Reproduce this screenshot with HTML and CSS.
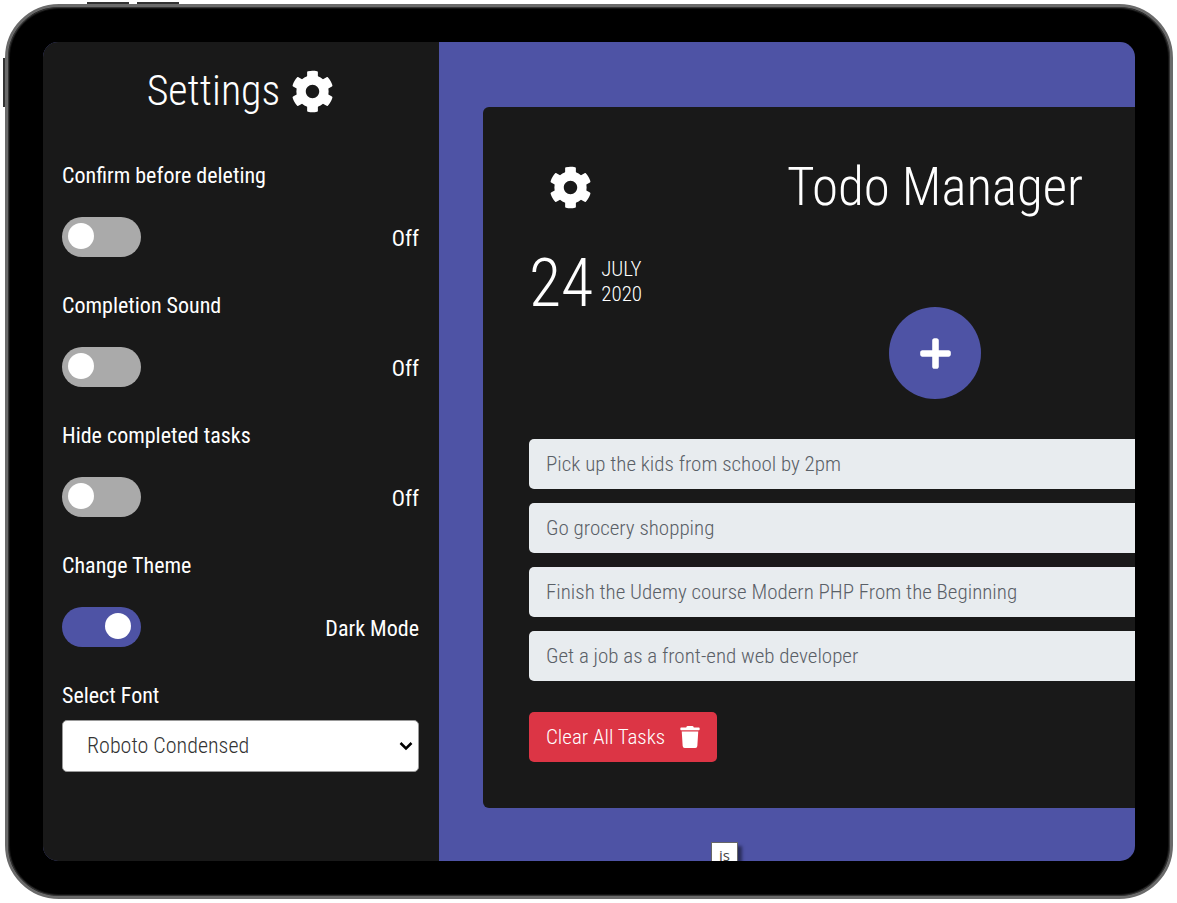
FILE: index.html
```html
<!DOCTYPE html>
<html lang="en">
<head>
<meta charset="utf-8">
<meta name="viewport" content="width=device-width, initial-scale=1">
<title>Todo Manager</title>
<link rel="stylesheet" href="styles.css">
</head>
<body>
<svg class="sprite" aria-hidden="true">
  <symbol id="cog" viewBox="0 0 512 512"><path d="M487.4 315.7l-42.6-24.6c4.3-23.2 4.3-47 0-70.2l42.6-24.6c4.9-2.8 7.1-8.6 5.5-14-11.1-35.6-30-67.8-54.7-94.6-3.8-4.1-10-5.1-14.8-2.3L380.8 110c-17.9-15.4-38.5-27.3-60.8-35.1V25.8c0-5.6-3.9-10.5-9.4-11.7-36.7-8.2-74.3-7.8-109.2 0-5.5 1.2-9.4 6.1-9.4 11.7V75c-22.2 7.9-42.8 19.8-60.8 35.1L88.7 85.5c-4.9-2.8-11-1.9-14.8 2.3-24.7 26.7-43.6 58.9-54.7 94.6-1.7 5.4.6 11.2 5.5 14L67.3 221c-4.3 23.2-4.3 47 0 70.2l-42.6 24.6c-4.9 2.8-7.1 8.6-5.5 14 11.1 35.6 30 67.8 54.7 94.6 3.8 4.1 10 5.1 14.8 2.3l42.6-24.6c17.9 15.4 38.5 27.3 60.8 35.1v49.2c0 5.6 3.9 10.5 9.4 11.7 36.7 8.2 74.3 7.8 109.2 0 5.5-1.2 9.4-6.1 9.4-11.7v-49.2c22.2-7.9 42.8-19.8 60.8-35.1l42.6 24.6c4.9 2.8 11 1.9 14.8-2.3 24.7-26.7 43.6-58.9 54.7-94.6 1.5-5.5-.7-11.3-5.6-14.1zM256 336c-44.1 0-80-35.9-80-80s35.9-80 80-80 80 35.9 80 80-35.9 80-80 80z"/></symbol>
</svg>
<div class="device">
  <div class="screen">
    <aside class="sidebar">
      <h2 class="sidebar-title">Settings <svg class="cog" aria-hidden="true"><use href="#cog"/></svg></h2>
      <div class="setting">
        <label class="setting-name" for="confirm">Confirm before deleting</label>
        <div class="setting-row"><input class="switch" type="checkbox" id="confirm"><span>Off</span></div>
      </div>
      <div class="setting">
        <label class="setting-name" for="sound">Completion Sound</label>
        <div class="setting-row"><input class="switch" type="checkbox" id="sound"><span>Off</span></div>
      </div>
      <div class="setting">
        <label class="setting-name" for="hide">Hide completed tasks</label>
        <div class="setting-row"><input class="switch" type="checkbox" id="hide"><span>Off</span></div>
      </div>
      <div class="setting">
        <label class="setting-name" for="theme">Change Theme</label>
        <div class="setting-row"><input class="switch" type="checkbox" id="theme" checked><span>Dark Mode</span></div>
      </div>
      <label class="setting-name" for="font">Select Font</label>
      <div class="select-wrap">
        <select class="font-select" id="font"><option>Roboto Condensed</option></select>
        <svg class="chevron" viewBox="0 0 14 10" aria-hidden="true"><path d="M1.500 2l5.500 5.500L12.500 2"/></svg>
      </div>
    </aside>
    <main class="main">
      <section class="card">
        <header class="card-head">
          <button class="cog-button" type="button" aria-label="Settings"><svg class="cog" aria-hidden="true"><use href="#cog"/></svg></button>
          <h1 class="title">Todo Manager</h1>
        </header>
        <div class="date">
          <span class="day">24</span>
          <span class="month-year"><span>JULY</span><span>2020</span></span>
        </div>
        <button class="add" type="button" aria-label="Add task"><svg class="plus" viewBox="0 0 448 512" aria-hidden="true"><path d="M416 208H272V64c0-17.670-14.330-32-32-32h-32c-17.670 0-32 14.330-32 32v144H32c-17.670 0-32 14.330-32 32v32c0 17.670 14.330 32 32 32h144v144c0 17.670 14.330 32 32 32h32c17.670 0 32-14.330 32-32V304h144c17.670 0 32-14.330 32-32v-32c0-17.670-14.330-32-32-32z"/></svg></button>
        <ul class="tasks">
          <li class="task">Pick up the kids from school by 2pm</li>
          <li class="task">Go grocery shopping</li>
          <li class="task">Finish the Udemy course Modern PHP From the Beginning</li>
          <li class="task">Get a job as a front-end web developer</li>
        </ul>
        <button class="clear" type="button">Clear All Tasks <svg class="trash" viewBox="0 0 448 512" aria-hidden="true"><path d="M432 32H312l-9.400-18.700A24 24 0 0 0 281.100 0H166.800a23.720 23.720 0 0 0-21.400 13.300L136 32H16A16 16 0 0 0 0 48v32a16 16 0 0 0 16 16h416a16 16 0 0 0 16-16V48a16 16 0 0 0-16-16zM53.200 467a48 48 0 0 0 47.900 45h245.800a48 48 0 0 0 47.900-45L416 128H32z"/></svg></button>
      </section>
    </main>
    <div class="tooltip" role="tooltip">js</div>
  </div>
  <i class="key key-one"></i>
  <i class="key key-two"></i>
  <i class="key key-side"></i>
</div>
</body>
</html>
```
FILE: styles.css
```css
* { box-sizing: border-box; }

body {
  margin: 0;
  height: 100vh;
  padding: 4px 4px 4px 5px;
  background: #fff;
  color: #fff;
  font: 300 22px/32px "Roboto Condensed", "Liberation Sans Narrow", Roboto, sans-serif;
  overflow: hidden;
}

button, select { font: inherit; }
svg { fill: currentColor; }
.sprite { position: absolute; width: 0; height: 0; }

.device {
  position: relative;
  height: 100%;
  padding: 35px;
  border: 3px solid #6a6a6a;
  border-radius: 54px;
  background: #000;
  box-shadow: inset 0 0 0 1px #333, inset 0 0 0 2px #111;
}

.key { position: absolute; background: #333; }
.key-one, .key-two { top: -5px; width: 42px; height: 2px; }
.key-one { left: 79px; }
.key-two { left: 129px; }
.key-side { left: -5px; top: 51px; width: 2px; height: 49px; }

.screen {
  position: relative;
  display: flex;
  height: 100%;
  border-radius: 15px;
  background: #4e53a5;
  overflow: hidden;
}

.sidebar {
  flex: none;
  width: 396px;
  padding: 24px 20px 24px 19px;
  background: #191919;
}

.sidebar-title {
  display: flex;
  align-items: center;
  justify-content: center;
  gap: 11px;
  margin: 0 0 44px;
  font-size: 42px;
  font-weight: 300;
  line-height: 50px;
}

.cog { display: block; width: 43px; height: 43px; }

.setting { padding-bottom: 33px; }
.setting-name { display: block; font-weight: 400; line-height: 32px; }
.setting-row {
  display: flex;
  align-items: flex-end;
  justify-content: space-between;
  padding-top: 25px;
  line-height: 36px;
  font-weight: 400;
}

.switch {
  appearance: none;
  width: 79px;
  height: 40px;
  margin: 0;
  padding: 6px;
  border-radius: 20px;
  background: #aaa;
}
.switch::before {
  content: "";
  display: block;
  width: 26px;
  height: 26px;
  border-radius: 50%;
  background: #fff;
}
.switch:checked { background: #4e53a5; }
.switch:checked::before { margin-left: 37px; }

.select-wrap { position: relative; margin-top: 8px; }
.font-select {
  appearance: none;
  display: block;
  width: 100%;
  height: 52px;
  padding: 0 24px;
  border: 1px solid #999;
  border-radius: 5px;
  background: #fff;
  color: #333;
}
.chevron {
  position: absolute;
  right: 6px;
  top: 21px;
  width: 14px;
  height: 10px;
  fill: none;
  stroke: #000;
  stroke-width: 2.500;
}

.main {
  flex: none;
  width: 992px;
  padding: 65px 44px;
}

.card {
  padding: 46px;
  border-radius: 6px;
  background: #191919;
}

.card-head {
  display: grid;
  grid-template-columns: 1fr auto 1fr;
  align-items: center;
  height: 68px;
}
.cog-button {
  justify-self: start;
  padding: 0 20px;
  border: 0;
  background: none;
  color: #fff;
}
.title { margin: 0; font-size: 53px; font-weight: 300; line-height: 68px; }

.date { display: flex; gap: 8px; margin-top: 28px; }
.day { font-size: 66px; line-height: 70px; }
.month-year {
  display: flex;
  flex-direction: column;
  padding-top: 8px;
  font-size: 21px;
  line-height: 25px;
}

.add {
  display: grid;
  place-items: center;
  width: 92px;
  height: 92px;
  margin: -12px auto 40px;
  padding: 0;
  border: 0;
  border-radius: 50%;
  background: #4e53a5;
  color: #fff;
}
.plus { width: 31px; height: 35px; }

.tasks {
  display: grid;
  gap: 14px;
  margin: 0 0 31px;
  padding: 0;
  list-style: none;
}
.task {
  padding: 9px 17px;
  border-radius: 5px;
  background: #e8ecef;
  color: #5a6067;
  font-size: 21px;
}

.clear {
  display: flex;
  align-items: center;
  gap: 15px;
  height: 50px;
  padding: 0 17px;
  border: 0;
  border-radius: 5px;
  background: #dc3545;
  color: #fff;
  font-size: 21px;
}
.trash { width: 20px; height: 22px; }

.tooltip {
  position: absolute;
  left: 668px;
  bottom: -7px;
  width: 27px;
  border: 1px solid #666;
  background: #fff;
  color: #444;
  font: 15px/24px "Open Sans", sans-serif;
  text-align: center;
  box-shadow: 4px 4px 3px #2b2e5c;
}
```
